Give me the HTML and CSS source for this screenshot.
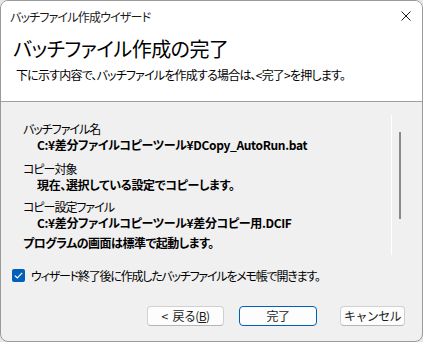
FILE: index.html
```html
<!DOCTYPE html>
<html lang="ja">
<head>
  <meta charset="UTF-8" />
  <title>バッチファイル作成ウイザード</title>
  <link rel="stylesheet" href="styles.css">
</head>
<body>

  <div class="window">

    <!-- タイトルバー -->
    <div class="titlebar">
      <span class="title">バッチファイル作成ウイザード</span>
      <span class="close">
        <svg width="10" height="10" viewBox="0 0 10 10">
          <path d="M0.5 0.5 L9.5 9.5 M9.5 0.5 L0.5 9.5" stroke="#1a1a1a" stroke-width="1" fill="none" />
        </svg>
      </span>
    </div>

    <!-- ヘッダー -->
    <div class="header">
      <h1>バッチファイル作成の完了</h1>
      <p>下に示す内容で、バッチファイルを作成する場合は、&lt;完了&gt;を押します。</p>
    </div>

    <!-- 内容 -->
    <div class="content">
      <div class="summary">
        <div class="lines">
          <div class="group first">
            <div class="label">バッチファイル名</div>
            <div class="value">C:¥差分ファイルコピーツール¥DCopy_AutoRun.bat</div>
          </div>
          <div class="group">
            <div class="label">コピー対象</div>
            <div class="value">現在、選択している設定でコピーします。</div>
          </div>
          <div class="group last">
            <div class="label">コピー設定ファイル</div>
            <div class="value">C:¥差分ファイルコピーツール¥差分コピー用.DCIF</div>
          </div>
          <div class="note">プログラムの画面は標準で起動します。</div>
        </div>
        <div class="scroll">
          <div class="thumb"></div>
        </div>
      </div>

      <label class="check">
        <span class="box">
          <svg width="9" height="7" viewBox="0 0 9 7">
            <path d="M0.8 3.6 L3.3 6 L8.2 0.9" stroke="#fff" stroke-width="1.2" fill="none" />
          </svg>
        </span>
        <span>ウィザード終了後に作成したバッチファイルをメモ帳で開きます。</span>
      </label>

      <div class="actions">
        <button class="btn back"><span class="lt">&lt;</span>戻る(<u>B</u>)</button>
        <button class="btn default">完了</button>
        <button class="btn cancel">キャンセル</button>
      </div>
    </div>

  </div>

</body>
</html>
```

FILE: styles.css
```css
html, body {
  margin: 0;
  padding: 0;
  background: #e8e8e8;
}

body {
  font-family: "Noto Sans CJK JP", "Noto Sans", sans-serif;
  font-feature-settings: "palt";
  color: #000;
  width: 423px;
  height: 342px;
}

.window {
  box-sizing: border-box;
  width: 423px;
  height: 342px;
  border: 1px solid #9a9a9a;
  border-radius: 8px;
  overflow: hidden;
  display: flex;
  flex-direction: column;
  background: #f0f0f0;
}

/* タイトルバー */
.titlebar {
  height: 30px;
  background: #fff;
  display: flex;
  align-items: center;
  justify-content: space-between;
  padding: 0 11px 0 9px;
}

.title {
  font-size: 12px;
  letter-spacing: -0.8px;
  color: #1a1a1a;
}

.close {
  display: flex;
}

/* ヘッダー */
.header {
  background: #fff;
  height: 70px;
  border-bottom: 1px solid #a0a0a0;
  padding-left: 12px;
}

.header h1 {
  margin: 0;
  padding-top: 4px;
  font-size: 20px;
  font-weight: normal;
  line-height: 28px;
  letter-spacing: -0.5px;
}

.header p {
  margin: 4px 0 0 3px;
  font-size: 12px;
  line-height: 16px;
  letter-spacing: -0.8px;
}

/* 内容 */
.content {
  flex: 1;
  display: flex;
  flex-direction: column;
}

.summary {
  display: flex;
  height: 140px;
  margin-top: 13px;
}

.lines {
  flex: 1;
  padding: 6px 0 0 22px;
  font-size: 12px;
  line-height: 16px;
}

.label {
  letter-spacing: -1px;
}

.group {
  margin-bottom: 6px;
}

.group.first {
  margin-bottom: 8px;
}

.group.last {
  margin-bottom: 4px;
}

.value {
  font-weight: bold;
  padding-left: 14px;
  letter-spacing: -0.35px;
}

.note {
  font-weight: bold;
  letter-spacing: -0.5px;
}

.scroll {
  width: 8px;
  margin-right: 15px;
  border-left: 1px solid #fff;
  padding-left: 7px;
}

.thumb {
  width: 2px;
  height: 87px;
  margin-top: 17px;
  background: #8a8a8a;
}

.check {
  display: flex;
  align-items: center;
  gap: 6px;
  margin: 12px 0 0 11px;
  font-size: 12px;
  letter-spacing: -1.2px;
}

.box {
  width: 13px;
  height: 13px;
  border-radius: 2px;
  background: #005fb8;
  display: flex;
  align-items: center;
  justify-content: center;
}

.actions {
  display: flex;
  justify-content: flex-end;
  margin: 22px 17px 0 0;
}

.btn {
  box-sizing: border-box;
  height: 20px;
  padding: 0;
  margin-left: 15px;
  font-family: inherit;
  font-size: 12px;
  letter-spacing: -0.6px;
  line-height: 16px;
  color: #1a1a1a;
  background: #fdfdfd;
  border: 1px solid #d0d0d0;
  border-bottom-color: #b5b5b5;
  border-radius: 4px;
}

.back {
  width: 77px;
}

.back .lt {
  margin-right: 5px;
}

.default {
  width: 78px;
  border: 1px solid #005fb8;
}

.cancel {
  width: 65px;
  margin-left: 23px;
}

.btn u {
  text-underline-offset: 1px;
}
```
